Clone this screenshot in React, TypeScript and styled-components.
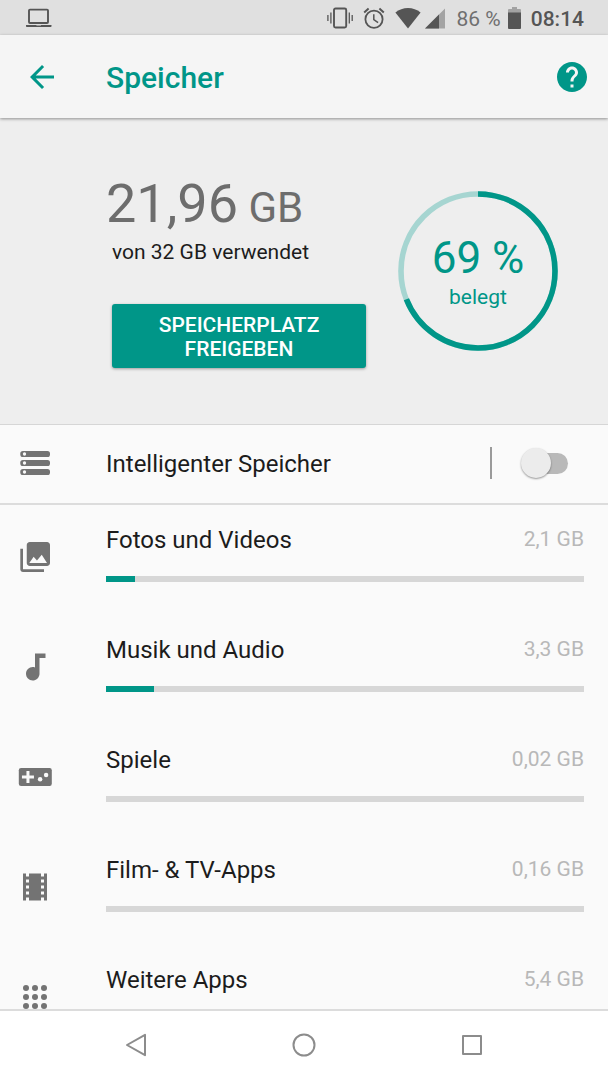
import React from 'react';
import styled, { createGlobalStyle } from 'styled-components';

const teal = '#009688';
const iconGrey = '#737373';
const statusInk = '#555555';

const GlobalStyle = createGlobalStyle`
  *, *::before, *::after { box-sizing: border-box; }
  body {
    margin: 0;
    background: #fafafa;
    font-family: Roboto, "Liberation Sans", sans-serif;
    color: #1c1c1c;
  }
  button { border: 0; padding: 0; background: none; font: inherit; color: inherit; cursor: pointer; }
  h1, p, ul { margin: 0; padding: 0; }
  svg { display: block; flex: none; }
`;

const Screen = styled.div`
  height: 100vh;
  display: flex;
  flex-direction: column;
`;

const StatusBar = styled.div`
  flex: none;
  height: 35px;
  padding: 0 24px 0 26px;
  display: flex;
  align-items: center;
  justify-content: space-between;
  background: #e0e0e0;
  color: ${statusInk};
`;

const StatusGroup = styled.div`
  display: flex;
  align-items: center;
`;

const StatusIcons = styled.div`
  display: flex;
  align-items: center;
  gap: 10px;
  margin-right: 12px;
`;

const Reception = styled.div`
  display: flex;
  gap: 4px;
`;

const StatusText = styled.span<{ $muted?: boolean }>`
  font-size: 21px;
  line-height: 24px;
  padding-top: 2px;
  font-weight: ${(p) => (p.$muted ? 400 : 500)};
  color: ${(p) => (p.$muted ? '#6f6f6f' : statusInk)};
`;

const Battery = styled.span`
  margin: 0 10px 0 7px;
`;

const AppBar = styled.header`
  flex: none;
  position: relative;
  z-index: 1;
  height: 83px;
  padding: 0 18px 0 24px;
  display: flex;
  align-items: center;
  background: #f5f5f5;
  color: ${teal};
  box-shadow: 0 1px 3px rgba(0, 0, 0, 0.4);
`;

const Title = styled.h1`
  flex: 1;
  margin-left: 46px;
  padding-top: 2px;
  font-size: 30px;
  line-height: 36px;
  font-weight: 500;
`;

const Content = styled.main`
  flex: 1;
  min-height: 0;
  overflow-y: auto;
  scrollbar-width: none;
`;

const Summary = styled.section`
  padding: 54px 50px 56px 106px;
  display: flex;
  justify-content: space-between;
  background: #eeeeee;
  border-bottom: 1px solid #d6d6d6;
`;

const Usage = styled.div`
  display: flex;
  flex-direction: column;
  align-items: flex-start;
`;

const Amount = styled.p`
  font-size: 54px;
  line-height: 64px;
  color: #6d6d6d;
`;

const Unit = styled.span`
  font-size: 42px;
  line-height: 42px;
`;

const Total = styled.p`
  margin: 2px 0 0 6px;
  font-size: 21px;
  line-height: 28px;
`;

const FreeButton = styled.button`
  width: 254px;
  margin: 38px 0 0 6px;
  padding: 9px 40px 7px;
  border-radius: 3px;
  background: ${teal};
  color: #ffffff;
  font-size: 21px;
  line-height: 24px;
  font-weight: 500;
  text-transform: uppercase;
  box-shadow: 0 1px 3px rgba(0, 0, 0, 0.35);
`;

const Gauge = styled.div`
  display: grid;
  place-items: center;
  align-self: flex-start;
  margin-top: 19px;
  color: ${teal};

  > * { grid-area: 1 / 1; }
`;

const GaugeLabel = styled.div`
  padding-top: 2px;
  display: flex;
  flex-direction: column;
  align-items: center;
`;

const Percent = styled.span`
  font-size: 44px;
  line-height: 50px;
`;

const Caption = styled.span`
  font-size: 21px;
  line-height: 28px;
`;

const SmartRow = styled.div`
  height: 80px;
  padding: 0 40px 2px 17px;
  display: flex;
  align-items: center;
  border-bottom: 2px solid #dcdcdc;
`;

const SmartLabel = styled.label`
  flex: 1;
  margin-left: 53px;
  padding-top: 2px;
  font-size: 24px;
  line-height: 30px;
`;

const Divider = styled.span`
  width: 2px;
  height: 32px;
  margin-right: 29px;
  background: #9a9a9a;
`;

const Switch = styled.input`
  appearance: none;
  width: 47px;
  height: 30px;
  margin: 0;
  display: grid;
  align-items: center;
  cursor: pointer;

  &::before, &::after {
    content: "";
    grid-area: 1 / 1;
  }
  &::before {
    width: 41px;
    height: 21px;
    margin-left: 6px;
    border-radius: 11px;
    background: #b9b9b9;
  }
  &::after {
    width: 30px;
    height: 30px;
    border-radius: 50%;
    background: #ececec;
    box-shadow: 0 1px 2px rgba(0, 0, 0, 0.4);
  }
  &:checked::before { background: #80cbc4; }
  &:checked::after { margin-left: 17px; background: ${teal}; }
`;

const CategoryList = styled.ul`
  list-style: none;
`;

const CategoryLink = styled.a`
  height: 110px;
  padding: 20px 24px 0 17px;
  display: flex;
  align-items: flex-start;
  color: inherit;
  text-decoration: none;
`;

const CategoryIcon = styled.span`
  margin-top: 14px;
`;

const CategoryBody = styled.span`
  flex: 1;
  margin-left: 53px;
  display: flex;
  flex-direction: column;
  gap: 21px;
`;

const CategoryHead = styled.span`
  display: flex;
  justify-content: space-between;
`;

const CategoryName = styled.span`
  font-size: 24px;
  line-height: 30px;
`;

const CategorySize = styled.span`
  font-size: 21px;
  line-height: 28px;
  color: #b8b8b8;
`;

const UsageBar = styled.progress`
  appearance: none;
  display: block;
  width: 100%;
  height: 6px;
  border: 0;

  &::-webkit-progress-bar { background: #d7d7d7; }
  &::-webkit-progress-value { background: ${teal}; }
`;

const NavBar = styled.nav`
  flex: none;
  height: 71px;
  padding-bottom: 2px;
  display: flex;
  justify-content: center;
  background: #ffffff;
  border-top: 2px solid #dcdcdc;
`;

const NavButton = styled.button`
  width: 168px;
  display: grid;
  place-items: center;
`;

type IconProps = { children: React.ReactNode; color?: string };

const Icon = ({ children, color = iconGrey }: IconProps) => (
  <svg width="36" height="36" viewBox="0 0 24 24" fill={color} aria-hidden="true">
    {children}
  </svg>
);

const NavIcon = ({ children }: { children: React.ReactNode }) => (
  <svg width="24" height="24" viewBox="0 0 24 24" fill="none" stroke="#8c8c8c" strokeWidth="2" strokeLinejoin="round" aria-hidden="true">
    {children}
  </svg>
);

const LaptopIcon = () => (
  <svg width="26" height="20" viewBox="0 0 26 20" aria-hidden="true">
    <rect x="3" y="1.6" width="19" height="13.4" rx="1" fill="none" stroke={statusInk} strokeWidth="1.9" />
    <path d="M0 17h10.4v.6h4.6V17h10.5v1.2q0 .8-.8.8H.8q-.8 0-.8-.8z" fill={statusInk} />
  </svg>
);

const VibrateIcon = () => (
  <svg width="26" height="22" viewBox="0 0 26 22" fill="none" stroke={statusInk} aria-hidden="true">
    <rect x="7" y="1.5" width="12.2" height="19" rx="1.5" strokeWidth="1.9" />
    <path d="M3.9 5.5v11M22.3 5.5v11M.9 8v6M25.2 8v6" strokeWidth="1.3" />
  </svg>
);

const AlarmIcon = () => (
  <svg width="22" height="22" viewBox="0 0 22 22" fill="none" stroke={statusInk} aria-hidden="true">
    <circle cx="11" cy="12.2" r="8.6" strokeWidth="1.8" />
    <path d="M10.8 7.2v5.4l4.3 3" strokeWidth="1.5" />
    <path d="M1.2 5.4L5.6 1.6M20.8 5.4l-4.4-3.8" strokeWidth="2" />
  </svg>
);

const WifiIcon = () => (
  <svg width="26" height="22" viewBox="0 0 26 22" fill={statusInk} aria-hidden="true">
    <path d="M13 21.4L.4 5.4C4 2.7 8.3 1 13 1s9 1.7 12.6 4.4z" />
  </svg>
);

const SignalIcon = () => (
  <svg width="20" height="22" viewBox="0 0 20 22" aria-hidden="true">
    <path d="M20 1.5v20H0z" fill="#a3a3a3" />
    <path d="M14 7.5v14H0z" fill={statusInk} />
  </svg>
);

const BatteryIcon = () => (
  <svg width="13" height="22" viewBox="0 0 13 22" aria-hidden="true">
    <path d="M4 0h5v2h3q1 0 1 1v3H0V3q0-1 1-1h3z" fill="#a3a3a3" />
    <path d="M0 5.6h13V21q0 1-1 1H1q-1 0-1-1z" fill={statusInk} />
  </svg>
);

const StorageIcon = () => (
  <Icon>
    {[4, 10, 16].map((y) => (
      <g key={y}>
        <rect x="2.2" y={y} width="19.8" height="4" rx="1.7" />
        <circle cx="5" cy={y + 2} r="1.1" fill="#fafafa" />
      </g>
    ))}
  </Icon>
);

const PhotosIcon = () => (
  <Icon>
    <path fillRule="evenodd" d="M22 16V4c0-1.1-.9-2-2-2H8.5c-1.1 0-2 .9-2 2v12c0 1.1.9 2 2 2H20c1.1 0 2-.9 2-2zM8.2 16l2.9-4.2 2.2 2.6 3.2-3.9L20 16z" />
    <path d="M2.2 6.5v13.700c0 1 .8 1.8 1.8 1.8h14v-1.8H4V6.5z" />
  </Icon>
);

const MusicIcon = () => (
  <Icon>
    <path d="M12 3v9.28c-.47-.17-.97-.28-1.5-.28C8.01 12 6 14.01 6 16.5S8.01 21 10.5 21c2.31 0 4.2-1.75 4.45-4H15V6h4V3h-7z" />
  </Icon>
);

const GamesIcon = () => (
  <Icon>
    <rect x="1.2" y="6" width="22" height="12" rx="1.5" />
    <path d="M6.3 8h2v3h3v2h-3v3h-2v-3h-3v-2h3z" fill="#fafafa" />
    <circle cx="15.4" cy="13.5" r="1.5" fill="#fafafa" />
    <circle cx="19.4" cy="10.6" r="1.5" fill="#fafafa" />
  </Icon>
);

const FilmIcon = () => (
  <Icon>
    <path d="M18 3v2h-2V3H8v2H6V3H4v18h2v-2h2v2h8v-2h2v2h2V3h-2zM8 17H6v-2h2v2zm0-4H6v-2h2v2zm0-4H6V7h2v2zm10 8h-2v-2h2v2zm0-4h-2v-2h2v2zm0-4h-2V7h2v2z" />
  </Icon>
);

const AppsIcon = () => (
  <Icon>
    {[6, 12, 18].map((y) => [6, 12, 18].map((x) => <circle key={`${x}-${y}`} cx={x} cy={y} r="2" />))}
  </Icon>
);

const categories = [
  { name: 'Fotos und Videos', size: '2,1 GB', share: 6, icon: <PhotosIcon /> },
  { name: 'Musik und Audio', size: '3,3 GB', share: 10, icon: <MusicIcon /> },
  { name: 'Spiele', size: '0,02 GB', share: 0, icon: <GamesIcon /> },
  { name: 'Film- & TV-Apps', size: '0,16 GB', share: 0, icon: <FilmIcon /> },
  { name: 'Weitere Apps', size: '5,4 GB', share: 17, icon: <AppsIcon /> },
];

export default function App() {
  return (
    <Screen>
      <GlobalStyle />
      <StatusBar>
        <LaptopIcon />
        <StatusGroup>
          <StatusIcons>
            <VibrateIcon />
            <AlarmIcon />
            <Reception>
              <WifiIcon />
              <SignalIcon />
            </Reception>
          </StatusIcons>
          <StatusText $muted>86 %</StatusText>
          <Battery>
            <BatteryIcon />
          </Battery>
          <StatusText>08:14</StatusText>
        </StatusGroup>
      </StatusBar>

      <AppBar>
        <button type="button" aria-label="Zurück">
          <Icon color={teal}>
            <path d="M20 11H7.83l5.59-5.59L12 4l-8 8 8 8 1.41-1.41L7.83 13H20v-2z" />
          </Icon>
        </button>
        <Title>Speicher</Title>
        <button type="button" aria-label="Hilfe">
          <Icon color={teal}>
            <path d="M12 2C6.48 2 2 6.48 2 12s4.48 10 10 10 10-4.48 10-10S17.52 2 12 2zm1 17h-2v-2h2v2zm2.07-7.75l-.9.92C13.45 12.9 13 13.5 13 15h-2v-.5c0-1.1.45-2.1 1.17-2.83l1.24-1.26c.37-.36.59-.86.59-1.41 0-1.1-.9-2-2-2s-2 .9-2 2H8c0-2.21 1.79-4 4-4s4 1.79 4 4c0 .88-.36 1.68-.93 2.25z" />
          </Icon>
        </button>
      </AppBar>

      <Content>
        <Summary>
          <Usage>
            <Amount>
              21,96<Unit> GB</Unit>
            </Amount>
            <Total>von 32 GB verwendet</Total>
            <FreeButton type="button">Speicherplatz freigeben</FreeButton>
          </Usage>
          <Gauge>
            <svg width="160" height="160" viewBox="0 0 160 160" fill="none" strokeWidth="5.6" aria-hidden="true">
              <circle cx="80" cy="80" r="77" stroke="#a6d5d1" />
              <circle cx="80" cy="80" r="77" stroke={teal} pathLength="100" strokeDasharray="69 31" transform="rotate(-90 80 80)" />
            </svg>
            <GaugeLabel>
              <Percent>69 %</Percent>
              <Caption>belegt</Caption>
            </GaugeLabel>
          </Gauge>
        </Summary>

        <SmartRow>
          <StorageIcon />
          <SmartLabel htmlFor="smart-storage">Intelligenter Speicher</SmartLabel>
          <Divider />
          <Switch id="smart-storage" type="checkbox" role="switch" />
        </SmartRow>

        <CategoryList>
          {categories.map((c) => (
            <li key={c.name}>
              <CategoryLink href="#">
                <CategoryIcon>{c.icon}</CategoryIcon>
                <CategoryBody>
                  <CategoryHead>
                    <CategoryName>{c.name}</CategoryName>
                    <CategorySize>{c.size}</CategorySize>
                  </CategoryHead>
                  <UsageBar value={c.share} max={100} aria-label={c.name} />
                </CategoryBody>
              </CategoryLink>
            </li>
          ))}
        </CategoryList>
      </Content>

      <NavBar>
        <NavButton type="button" aria-label="Zurück">
          <NavIcon>
            <path d="M21 1.8v20.4L3 12z" />
          </NavIcon>
        </NavButton>
        <NavButton type="button" aria-label="Startbildschirm">
          <NavIcon>
            <circle cx="12" cy="12" r="10.5" />
          </NavIcon>
        </NavButton>
        <NavButton type="button" aria-label="Übersicht">
          <NavIcon>
            <rect x="3" y="3" width="18" height="18" />
          </NavIcon>
        </NavButton>
      </NavBar>
    </Screen>
  );
}
